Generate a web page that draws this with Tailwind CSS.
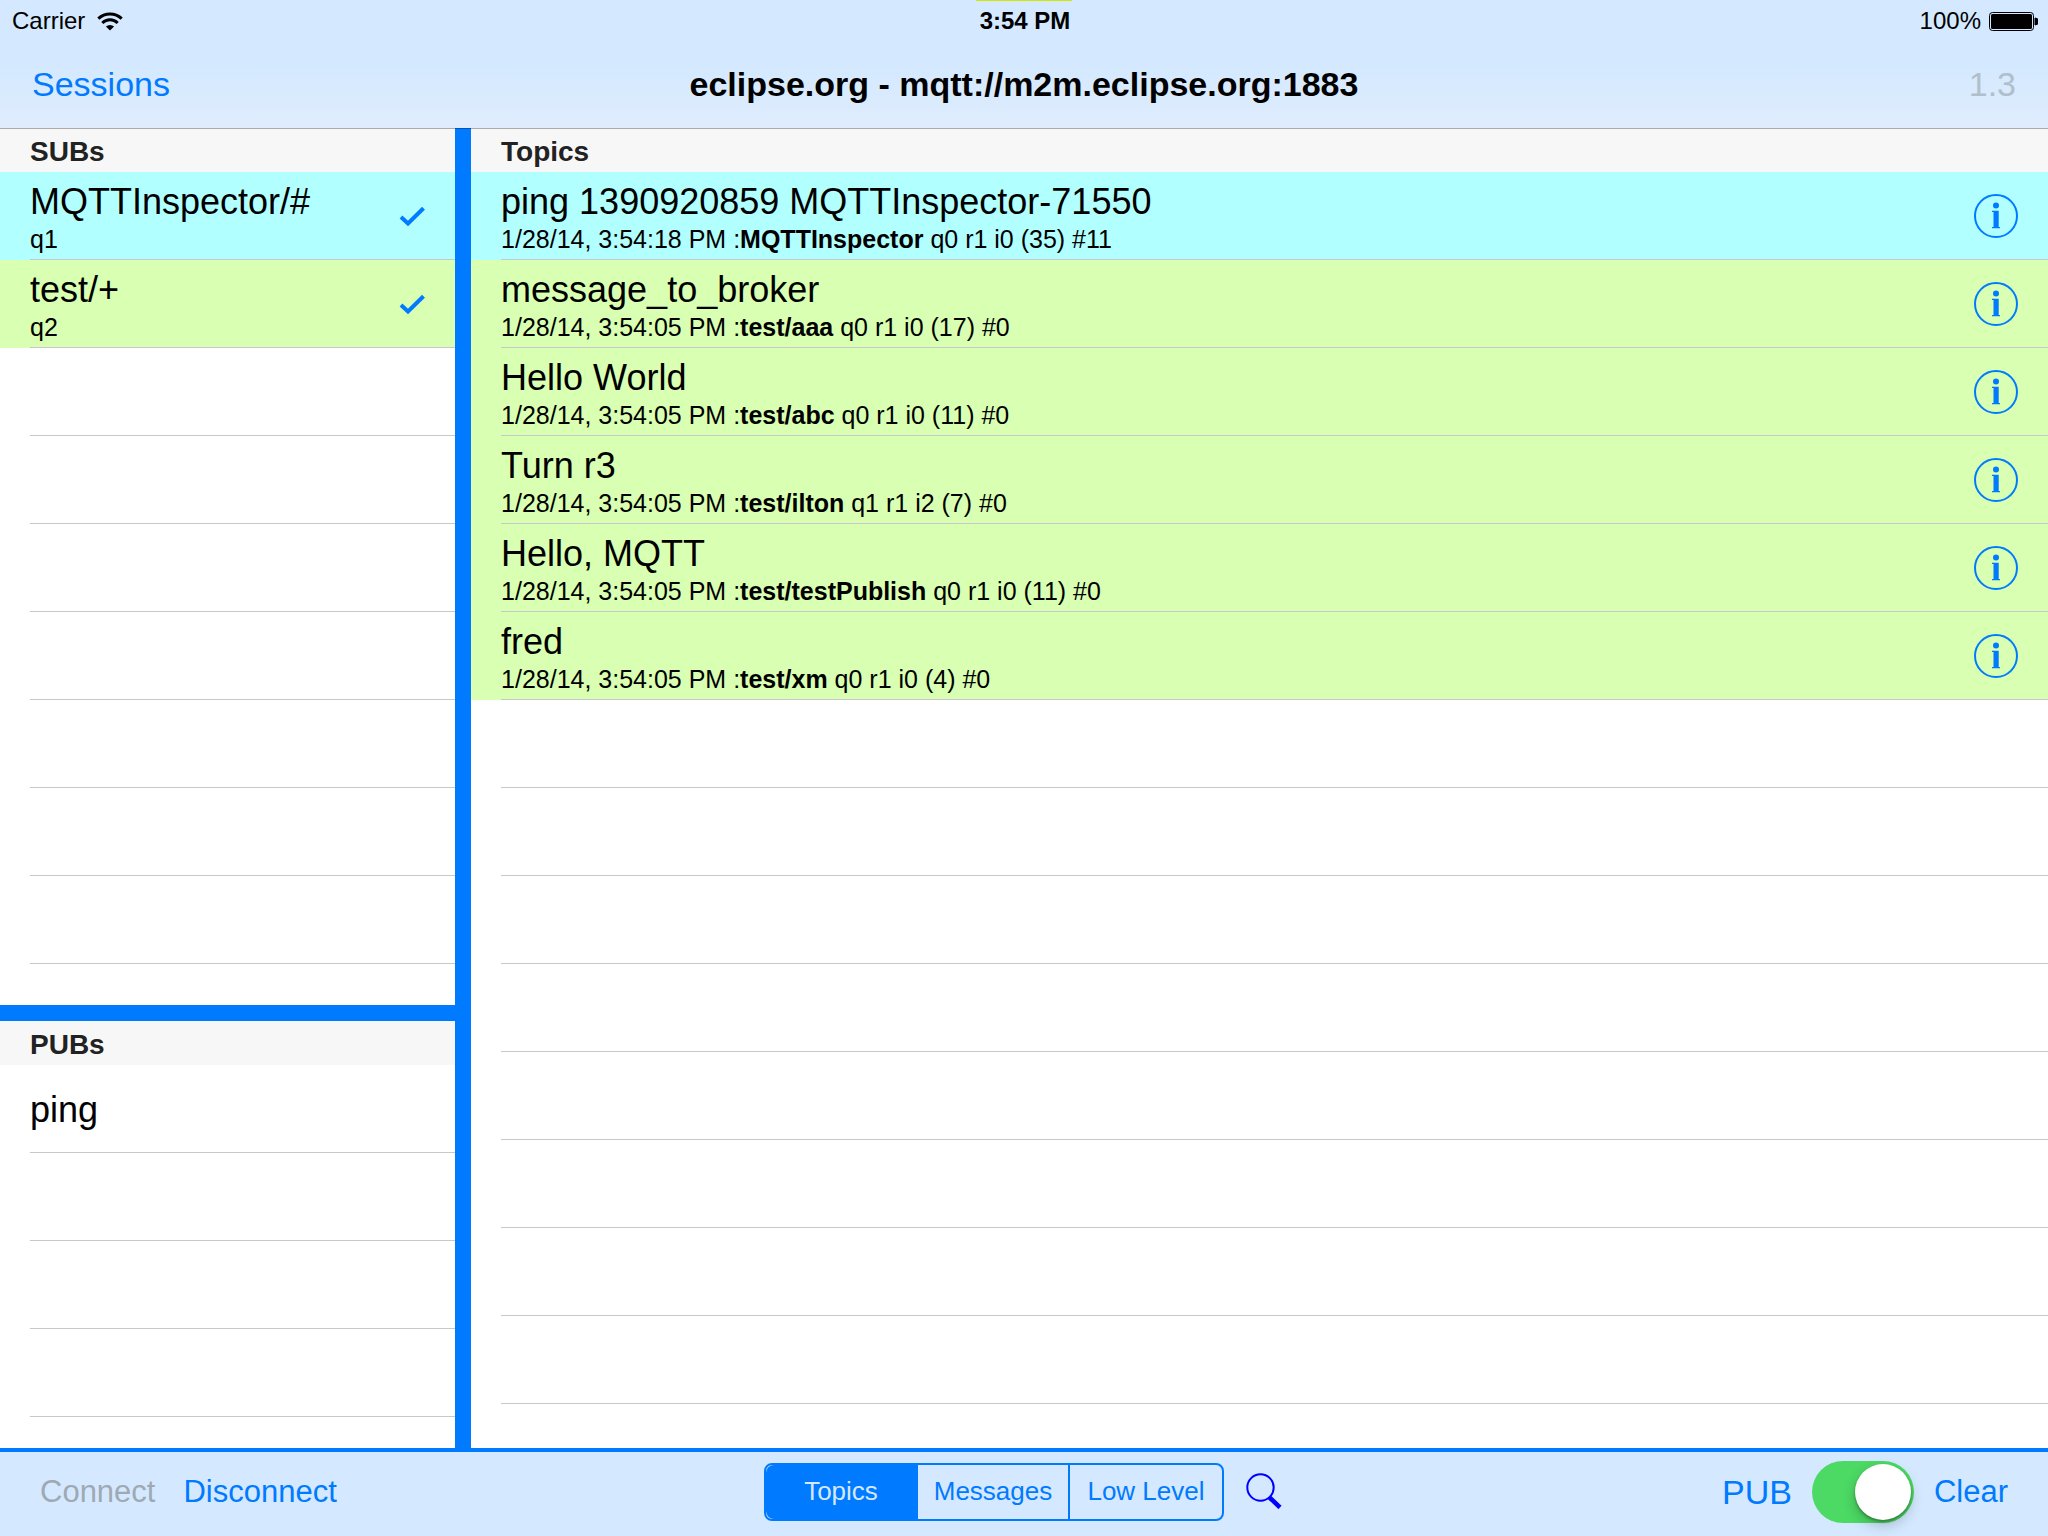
<!DOCTYPE html>
<html lang="en">
<head>
<meta charset="utf-8">
<meta name="viewport" content="width=device-width, initial-scale=1">
<title>MQTT Inspector</title>
<script src="https://cdn.jsdelivr.net/npm/@tailwindcss/browser@4"></script>
</head>
<body class="flex h-screen flex-col overflow-hidden bg-white font-['Liberation_Sans',Arial,sans-serif] text-black">

<svg class="hidden" aria-hidden="true">
  <symbol id="check" viewBox="0 0 26 20">
    <path d="M2 11 9 17.500 24.500 2.300" fill="none" stroke="#007aff" stroke-width="4"/>
  </symbol>
  <symbol id="info" viewBox="0 0 44 44">
    <circle cx="22" cy="22" r="21" fill="none" stroke="#007aff" stroke-width="2"/>
    <circle cx="22" cy="11.500" r="3" fill="#007aff"/>
    <path d="M18 16.700h6.700v16.300h1.300v1.300h-8v-1.300h1.500V18h-1.500z" fill="#007aff"/>
  </symbol>
</svg>

<header class="relative z-10 shrink-0 bg-linear-to-b from-[#d4e9ff] from-50% to-[#dfecfd] shadow-[0_1px_0_rgba(0,0,0,0.3)]">
  <div class="absolute top-0 left-1/2 h-px w-24 -translate-x-1/2 bg-[#d3e600]"></div>
  <div class="grid h-[42px] grid-cols-3 items-center pr-2.5 pl-3 text-[24px]">
    <div class="flex items-center gap-3">
      <span>Carrier</span>
      <svg class="h-[19px] w-[26px]" viewBox="0 0 26 19" fill="none" stroke="#000" aria-label="Wi-Fi">
        <path d="M1.300 6.600a17 17 0 0 1 23.400 0" stroke-width="3"/>
        <path d="M5.300 11a11 11 0 0 1 15.400 0" stroke-width="3"/>
        <path d="M13 18.500 8.900 14.600a6 6 0 0 1 8.200 0z" fill="#000" stroke="none"/>
      </svg>
    </div>
    <div class="text-center font-bold">3:54 PM</div>
    <div class="flex items-center justify-end gap-2">
      <span>100%</span>
      <svg class="h-[19px] w-[49px]" viewBox="0 0 49 19" aria-label="Battery full">
        <rect x=".5" y=".5" width="44" height="18" rx="3" fill="none" stroke="#000"/>
        <rect x="2" y="2" width="41" height="15" rx="1.500" fill="#000"/>
        <path d="M46 6a3.500 3.500 0 0 1 0 7z" fill="#000" stroke="#000"/>
      </svg>
    </div>
  </div>
  <nav class="grid h-[86px] grid-cols-[1fr_auto_1fr] items-center px-8 pb-0.5 text-[34px]">
    <a href="#" class="text-[#007aff]">Sessions</a>
    <h1 class="font-bold">eclipse.org - mqtt://m2m.eclipse.org:1883</h1>
    <span class="text-right text-[#b1bfcd]">1.3</span>
  </nav>
</header>

<main class="flex min-h-0 flex-1">
  <aside class="flex w-[23%] shrink-0 border-r-[16px] border-[#007aff]">
    <div class="flex min-w-0 flex-1 flex-col">
      <section class="min-h-0 flex-[877_877_0%] overflow-hidden">
        <h2 class="flex h-11 items-center bg-[#f7f7f7] pt-1 pl-[30px] text-[28px] font-bold text-[#222]">SUBs</h2>
        <ul>
          <li class="h-[88px] bg-[#b2ffff] pl-[30px]">
            <div class="flex h-full items-center justify-between border-b border-[#c8c7cc] pr-[30px]">
              <div class="pt-0.5"><p class="text-[36px] leading-[44px]">MQTTInspector/#</p><p class="text-[25px] leading-[30px]">q1</p></div>
              <svg class="h-5 w-[26px]" aria-label="Subscribed"><use href="#check"/></svg>
            </div>
          </li>
          <li class="h-[88px] bg-[#d8ffb2] pl-[30px]">
            <div class="flex h-full items-center justify-between border-b border-[#c8c7cc] pr-[30px]">
              <div class="pt-0.5"><p class="text-[36px] leading-[44px]">test/+</p><p class="text-[25px] leading-[30px]">q2</p></div>
              <svg class="h-5 w-[26px]" aria-label="Subscribed"><use href="#check"/></svg>
            </div>
          </li>
          <li class="ml-[30px] h-[88px] border-b border-[#c8c7cc]"></li>
          <li class="ml-[30px] h-[88px] border-b border-[#c8c7cc]"></li>
          <li class="ml-[30px] h-[88px] border-b border-[#c8c7cc]"></li>
          <li class="ml-[30px] h-[88px] border-b border-[#c8c7cc]"></li>
          <li class="ml-[30px] h-[88px] border-b border-[#c8c7cc]"></li>
          <li class="ml-[30px] h-[88px] border-b border-[#c8c7cc]"></li>
          <li class="ml-[30px] h-[88px] border-b border-[#c8c7cc]"></li>
        </ul>
      </section>
      <div class="h-4 shrink-0 bg-[#007aff]"></div>
      <section class="min-h-0 flex-[427_427_0%] overflow-hidden">
        <h2 class="flex h-11 items-center bg-[#f7f7f7] pt-1 pl-[30px] text-[28px] font-bold text-[#222]">PUBs</h2>
        <ul>
          <li class="ml-[30px] flex h-[88px] items-center border-b border-[#c8c7cc] pt-0.5 text-[36px]">ping</li>
          <li class="ml-[30px] h-[88px] border-b border-[#c8c7cc]"></li>
          <li class="ml-[30px] h-[88px] border-b border-[#c8c7cc]"></li>
          <li class="ml-[30px] h-[88px] border-b border-[#c8c7cc]"></li>
        </ul>
      </section>
    </div>
  </aside>

  <section class="min-w-0 flex-1 overflow-hidden">
    <h2 class="flex h-11 items-center bg-[#f7f7f7] pt-1 pl-[30px] text-[28px] font-bold text-[#222]">Topics</h2>
    <ul>
      <li class="h-[88px] bg-[#b2ffff] pl-[30px]">
        <div class="flex h-full items-center justify-between border-b border-[#c8c7cc] pr-[30px]">
          <div class="pt-0.5"><p class="text-[36px] leading-[44px]">ping 1390920859 MQTTInspector-71550</p><p class="text-[25px] leading-[30px]">1/28/14, 3:54:18 PM :<b>MQTTInspector</b> q0 r1 i0 (35) #11</p></div>
          <button type="button" aria-label="Details"><svg class="size-11"><use href="#info"/></svg></button>
        </div>
      </li>
      <li class="h-[88px] bg-[#d8ffb2] pl-[30px]">
        <div class="flex h-full items-center justify-between border-b border-[#c8c7cc] pr-[30px]">
          <div class="pt-0.5"><p class="text-[36px] leading-[44px]">message_to_broker</p><p class="text-[25px] leading-[30px]">1/28/14, 3:54:05 PM :<b>test/aaa</b> q0 r1 i0 (17) #0</p></div>
          <button type="button" aria-label="Details"><svg class="size-11"><use href="#info"/></svg></button>
        </div>
      </li>
      <li class="h-[88px] bg-[#d8ffb2] pl-[30px]">
        <div class="flex h-full items-center justify-between border-b border-[#c8c7cc] pr-[30px]">
          <div class="pt-0.5"><p class="text-[36px] leading-[44px]">Hello World</p><p class="text-[25px] leading-[30px]">1/28/14, 3:54:05 PM :<b>test/abc</b> q0 r1 i0 (11) #0</p></div>
          <button type="button" aria-label="Details"><svg class="size-11"><use href="#info"/></svg></button>
        </div>
      </li>
      <li class="h-[88px] bg-[#d8ffb2] pl-[30px]">
        <div class="flex h-full items-center justify-between border-b border-[#c8c7cc] pr-[30px]">
          <div class="pt-0.5"><p class="text-[36px] leading-[44px]">Turn r3</p><p class="text-[25px] leading-[30px]">1/28/14, 3:54:05 PM :<b>test/ilton</b> q1 r1 i2 (7) #0</p></div>
          <button type="button" aria-label="Details"><svg class="size-11"><use href="#info"/></svg></button>
        </div>
      </li>
      <li class="h-[88px] bg-[#d8ffb2] pl-[30px]">
        <div class="flex h-full items-center justify-between border-b border-[#c8c7cc] pr-[30px]">
          <div class="pt-0.5"><p class="text-[36px] leading-[44px]">Hello, MQTT</p><p class="text-[25px] leading-[30px]">1/28/14, 3:54:05 PM :<b>test/testPublish</b> q0 r1 i0 (11) #0</p></div>
          <button type="button" aria-label="Details"><svg class="size-11"><use href="#info"/></svg></button>
        </div>
      </li>
      <li class="h-[88px] bg-[#d8ffb2] pl-[30px]">
        <div class="flex h-full items-center justify-between border-b border-[#c8c7cc] pr-[30px]">
          <div class="pt-0.5"><p class="text-[36px] leading-[44px]">fred</p><p class="text-[25px] leading-[30px]">1/28/14, 3:54:05 PM :<b>test/xm</b> q0 r1 i0 (4) #0</p></div>
          <button type="button" aria-label="Details"><svg class="size-11"><use href="#info"/></svg></button>
        </div>
      </li>
      <li class="ml-[30px] h-[88px] border-b border-[#c8c7cc]"></li>
      <li class="ml-[30px] h-[88px] border-b border-[#c8c7cc]"></li>
      <li class="ml-[30px] h-[88px] border-b border-[#c8c7cc]"></li>
      <li class="ml-[30px] h-[88px] border-b border-[#c8c7cc]"></li>
      <li class="ml-[30px] h-[88px] border-b border-[#c8c7cc]"></li>
      <li class="ml-[30px] h-[88px] border-b border-[#c8c7cc]"></li>
      <li class="ml-[30px] h-[88px] border-b border-[#c8c7cc]"></li>
      <li class="ml-[30px] h-[88px] border-b border-[#c8c7cc]"></li>
    </ul>
  </section>
</main>

<footer class="grid h-[88px] shrink-0 grid-cols-[1fr_auto_1fr] items-center border-t-4 border-[#007aff] bg-[#d4e9ff] px-10 pb-1 text-[31px] text-[#007aff]">
  <div class="flex items-center gap-7">
    <button type="button" disabled class="text-[#9fa9b3]">Connect</button>
    <button type="button">Disconnect</button>
  </div>
  <div class="flex items-center gap-[22px] pr-0.5">
    <fieldset class="grid h-[58px] w-[460px] grid-cols-3 divide-x-2 divide-[#007aff] overflow-hidden rounded-lg border-2 border-[#007aff] text-[26px]">
      <label class="flex items-center justify-center pb-0.5 has-checked:bg-[#007aff] has-checked:text-[#d4e9ff]"><input type="radio" name="view" class="sr-only" checked>Topics</label>
      <label class="flex items-center justify-center pb-0.5 has-checked:bg-[#007aff] has-checked:text-[#d4e9ff]"><input type="radio" name="view" class="sr-only">Messages</label>
      <label class="flex items-center justify-center pb-0.5 has-checked:bg-[#007aff] has-checked:text-[#d4e9ff]"><input type="radio" name="view" class="sr-only">Low Level</label>
    </fieldset>
    <button type="button" aria-label="Search" class="pb-0.5">
      <svg class="size-9" viewBox="0 0 36 36" fill="none" stroke="#0000ff">
        <circle cx="14.500" cy="14.500" r="13.200" stroke-width="2"/>
        <path d="m23.500 24.500 10.500 10" stroke-width="4.500"/>
      </svg>
    </button>
  </div>
  <div class="flex items-center justify-end gap-5">
    <label for="pub" class="text-[34px]">PUB</label>
    <input id="pub" type="checkbox" role="switch" checked class="flex h-[62px] w-[102px] appearance-none items-center rounded-full bg-[#b8c4d0] p-[3px] before:size-14 before:rounded-full before:bg-white before:shadow-[0_6px_14px_rgba(0,0,0,0.2),0_2px_3px_rgba(0,0,0,0.3)] before:content-[''] checked:justify-end checked:bg-[#4cd964]">
    <button type="button">Clear</button>
  </div>
</footer>
</body>
</html>
